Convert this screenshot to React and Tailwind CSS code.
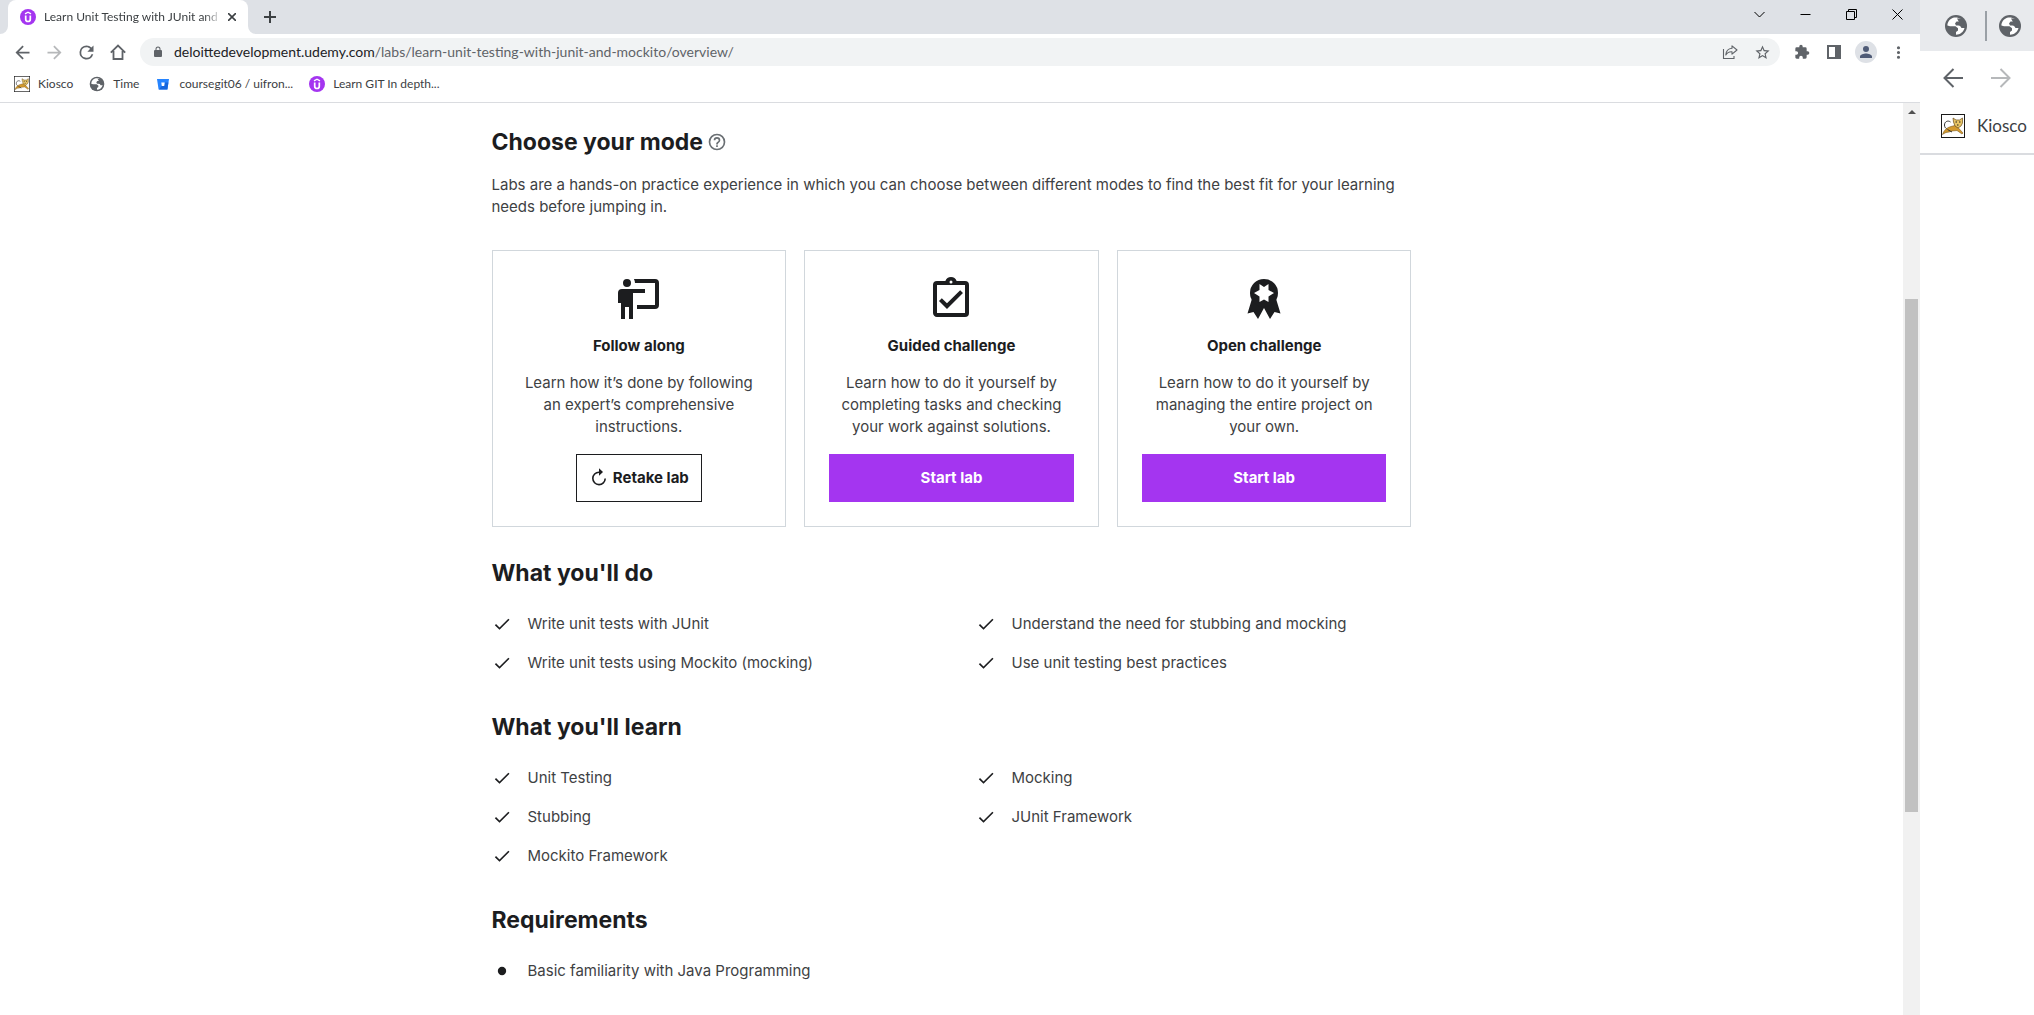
import React from "react";

/* ---------- icons ---------- */

function Icon({ d, className, viewBox = "0 0 24 24", children }) {
  return (
    <svg viewBox={viewBox} className={className} fill="currentColor" aria-hidden="true">
      {d ? <path d={d} /> : null}
      {children}
    </svg>
  );
}

const paths = {
  back: "M20 11H7.83l5.59-5.59L12 4l-8 8 8 8 1.41-1.41L7.83 13H20v-2z",
  forward: "M12 4l-1.41 1.41L16.17 11H4v2h12.17l-5.58 5.59L12 20l8-8z",
  reload:
    "M17.65 6.35A7.96 7.96 0 0 0 12 4a8 8 0 1 0 7.73 10h-2.08A6 6 0 1 1 12 6c1.66 0 3.14.69 4.22 1.78L13 11h7V4l-2.35 2.35z",
  lock: "M18 8h-1V6A5 5 0 0 0 7 6v2H6a2 2 0 0 0-2 2v10a2 2 0 0 0 2 2h12a2 2 0 0 0 2-2V10a2 2 0 0 0-2-2zM9 8V6a3 3 0 0 1 6 0v2H9z",
  star: "M22 9.24l-7.19-.62L12 2 9.19 8.63 2 9.24l5.46 4.73L5.82 21 12 17.27 18.18 21l-1.63-7.03L22 9.24zM12 15.4l-3.76 2.27 1-4.28-3.32-2.88 4.38-.38L12 6.1l1.71 4.04 4.38.38-3.32 2.88 1 4.28L12 15.4z",
  puzzle:
    "M20.5 11H19V7a2 2 0 0 0-2-2h-4V3.5a2.5 2.5 0 0 0-5 0V5H4a2 2 0 0 0-2 2v3.8h1.5a2.7 2.7 0 0 1 0 5.4H2V20c0 1.1.9 2 2 2h3.8v-1.5a2.7 2.7 0 0 1 5.4 0V22H17a2 2 0 0 0 2-2v-4h1.5a2.5 2.5 0 0 0 0-5z",
  person: "M12 12a4 4 0 1 0 0-8 4 4 0 0 0 0 8zm0 2c-2.67 0-8 1.34-8 4v2h16v-2c0-2.66-5.33-4-8-4z",
  dots: "M12 8a2 2 0 1 0 0-4 2 2 0 0 0 0 4zm0 2a2 2 0 1 0 0 4 2 2 0 0 0 0-4zm0 6a2 2 0 1 0 0 4 2 2 0 0 0 0-4z",
  globe:
    "M12 1a11 11 0 1 0 0 22 11 11 0 0 0 0-22zM11 20.500A8.600 8.600 0 0 1 3.600 10.500L6 12h4l2 2v3l-1 3.500zM18 18l-2-3-3-1-1-3 3-1 1 2 3 1 1.500 0A8.500 8.500 0 0 1 18 18zM8 9V7l3-1 1-2.500c3 0 1 1.500 2 2.500l-2 2-2 1z",
  help: "M11 18h2v-2h-2v2zm1-16a10 10 0 1 0 0 20 10 10 0 0 0 0-20zm0 18a8 8 0 1 1 0-16 8 8 0 0 1 0 16zm0-14a4 4 0 0 0-4 4h2a2 2 0 1 1 4 0c0 2-3 1.75-3 5h2c0-2.25 3-2.5 3-5a4 4 0 0 0-4-4z",
  check: "M9 16.17L4.83 12l-1.42 1.41L9 19 21 7l-1.41-1.41z",
  clipboard:
    "M19 3h-4.18a3 3 0 0 0-5.64 0H5a2 2 0 0 0-2 2v14c0 1.1.9 2 2 2h14a2 2 0 0 0 2-2V5a2 2 0 0 0-2-2zm-7-.25a.75.75 0 1 1 0 1.5.75.75 0 0 1 0-1.5zM19 19H5V5h14v14zM17.99 9l-1.41-1.42-6.59 6.59-2.58-2.57-1.42 1.41 4 3.99z",
  teacher:
    "M20 17a2 2 0 0 0 2-2V4a2 2 0 0 0-2-2H9.46c.35.61.54 1.3.54 2h10v11h-9v2h9zM15 7v2H9v13H7v-6H5v6H3v-8H1.5V9a2 2 0 0 1 2-2H15zM8 4a2 2 0 1 1-4 0 2 2 0 0 1 4 0z",
};

function GlobeMark({ className }) {
  return (
    <svg viewBox="0 0 24 24" className={className} aria-hidden="true">
      <circle cx="12" cy="12" r="11" fill="#5f6368" />
      <path
        d="M10 3.5C6 4.500 3.400 8 3.400 11.500L6 12.300h5.500l2.500 2v2.200l-2 1.500v2.700c4 0 7.500-2.700 8.500-6.700h-3l-1.500-2.500h-4L11 9.500l1.500-2h2.300L17 5C15 3.700 12.500 3.200 10 3.500z"
        fill="#fff"
      />
      <path d="M13 4.500h4l2.500 3.500v4.500H17L14.500 11l-2-1.500 2.500-1.500z" fill="#5f6368" />
    </svg>
  );
}

function UdemyMark({ className }) {
  return (
    <svg viewBox="0 0 16 16" className={className} aria-hidden="true">
      <circle cx="8" cy="8" r="8" fill="#a435f0" />
      <path d="M5 4.9 8 3.2l3 1.7" fill="none" stroke="#fff" strokeWidth="1.3" />
      <path d="M5.7 6.5v3.700a2.300 2.300 0 0 0 4.600 0V6.500" fill="none" stroke="#fff" strokeWidth="1.7" />
    </svg>
  );
}

function KioscoMark({ className }) {
  return (
    <svg viewBox="0 0 24 24" className={className} aria-hidden="true">
      <rect x=".5" y=".5" width="23" height="23" fill="#fff" stroke="#1a1a1a" />
      <path d="M1.5 20.500C3 16 6 13.500 10 12.500l4-1 3 2 5 5.500-1 1-5-3.500-5 .5-3 1-3 .5-2 1z" fill="#d39a2f" stroke="#7d5a1c" strokeWidth=".6" />
      <path d="M12 4l3 2h3.500l3-2v5l-1.500 3-3 2-3-2-1.500-4z" fill="#e8c565" stroke="#6b4d1a" strokeWidth=".7" />
      <path d="M14.500 8H16M18 8h1.500M16 11h1.500" stroke="#222" strokeWidth="1" />
      <path d="M9.500 8C7 6 3.500 7.500 3.500 11c0 2 .8 3 2 3.500M6.500 15.500 11 18" fill="none" stroke="#333" strokeWidth="1" />
    </svg>
  );
}

function BitbucketMark({ className }) {
  return (
    <svg viewBox="0 0 16 16" className={className} aria-hidden="true">
      <path d="M2 3h12l-1.6 10.500H3.600z" fill="#2684ff" />
      <path d="M13.400 6.500H9.700L9.200 10H6.800l-2.900 3.500h8.500z" fill="#1666dc" />
      <path d="M6.300 6.500h3.400l-.5 3.500H6.800z" fill="#fff" />
    </svg>
  );
}

function BadgeIcon({ className }) {
  return (
    <svg viewBox="0 0 48 48" className={className} aria-hidden="true">
      <path d="M12.500 22 7.500 38.500l6-1.500 4.500 7 6-11 6 11 4.500-7 6 1.500L35.500 22z" fill="#1c1d1f" />
      <circle cx="24" cy="18" r="14" fill="#1c1d1f" />
      <path d="M24 12l4.500-3 0 6 5.500 3-5.500 3.500 0 5.500-4.500-2.500-4.500 2.500 0-5.500L14 18l5.500-3 0-6z" fill="#fff" />
    </svg>
  );
}

function RetakeIcon({ className }) {
  return (
    <svg viewBox="0 0 20 20" className={className} aria-hidden="true">
      <path d="M11 4.200H10a6.200 6.200 0 1 0 6.200 6.300" fill="none" stroke="currentColor" strokeWidth="1.6" />
      <path d="M10 .3v7.500l4-3.800z" fill="currentColor" />
    </svg>
  );
}

/* ---------- browser window ---------- */

function IconButton({ label, className = "", children }) {
  return (
    <button type="button" aria-label={label} className={`flex h-8 w-8 items-center justify-center text-[#5f6368] ${className}`}>
      {children}
    </button>
  );
}

function WindowButton({ label, d }) {
  return (
    <button type="button" aria-label={label} className="flex h-7 w-[46px] items-center justify-center text-black">
      <svg viewBox="0 0 11 11" className="size-[11px]" fill="none" stroke="currentColor" aria-hidden="true">
        <path d={d} />
      </svg>
    </button>
  );
}

function TabStrip() {
  return (
    <div className="flex h-[34px] bg-[#dee1e6]">
      <svg viewBox="0 0 8 8" className="size-2 self-end" aria-hidden="true">
        <path d="M8 0v8H0a8 8 0 0 0 8-8z" fill="#fff" />
      </svg>
      <div className="flex w-60 items-center rounded-t-lg bg-white pr-2.5 pl-3">
        <UdemyMark className="mr-2 size-4 shrink-0" />
        <span className="min-w-0 flex-1 whitespace-nowrap mask-r-from-90% text-xs text-[#3c4043]">
          Learn Unit Testing with JUnit and
        </span>
        <button type="button" aria-label="Close tab" className="ml-1 flex size-3 shrink-0 items-center justify-center text-[#3c4043]">
          <svg viewBox="0 0 8 8" className="size-2" stroke="currentColor" strokeWidth="1.6" aria-hidden="true">
            <path d="M0 0l8 8M8 0L0 8" />
          </svg>
        </button>
      </div>
      <svg viewBox="0 0 8 8" className="size-2 self-end" aria-hidden="true">
        <path d="M0 0v8h8a8 8 0 0 1-8-8z" fill="#fff" />
      </svg>
      <button type="button" aria-label="New tab" className="flex w-7 items-center justify-center text-[#3c4043]">
        <svg viewBox="0 0 12 12" className="size-3" stroke="currentColor" strokeWidth="2" aria-hidden="true">
          <path d="M6 0v12M0 6h12" />
        </svg>
      </button>
      <div className="ml-auto flex">
        <WindowButton label="Search tabs" d="M.5 3l5 5 5-5" />
        <WindowButton label="Minimize" d="M.5 5.5h10" />
        <WindowButton label="Restore" d="M.5 2.5h8v8h-8zM2.5 2.5v-2h8v8h-2" />
        <WindowButton label="Close" d="M.5.5l10 10M10.5.5l-10 10" />
      </div>
    </div>
  );
}

function Toolbar() {
  return (
    <div className="flex h-9 items-center px-1.5">
      <IconButton label="Back"><Icon d={paths.back} className="size-[21px]" /></IconButton>
      <IconButton label="Forward" className="opacity-45"><Icon d={paths.forward} className="size-[21px]" /></IconButton>
      <IconButton label="Reload"><Icon d={paths.reload} className="size-[21px]" /></IconButton>
      <IconButton label="Home">
        <svg viewBox="0 0 16 16" className="size-4" fill="none" stroke="currentColor" strokeWidth="1.8" aria-hidden="true">
          <path d="M.8 8.600 8 1.500l7.200 7.100M3.500 7v8h9V7" />
        </svg>
      </IconButton>
      <div className="mx-1.5 flex h-7 flex-1 items-center rounded-full bg-[#f1f3f4] pr-0.5 pl-3">
        <Icon d={paths.lock} className="size-3 text-[#5f6368]" />
        <a href="#page" className="ml-2.5 flex-1 whitespace-nowrap text-sm text-[#202124]">
          deloittedevelopment.udemy.com
          <span className="text-[#5f6368]">/labs/learn-unit-testing-with-junit-and-mockito/overview/</span>
        </a>
        <IconButton label="Share">
          <svg viewBox="0 0 16 16" className="size-4" fill="none" stroke="currentColor" strokeWidth="1.1" aria-hidden="true">
            <path d="M1.500 5v9.500H12V12" />
            <path d="M10 1.800 15 6l-5 4.200V7.800C7 7.600 5 8.800 3.800 11c.2-3.600 2.500-6.300 6.200-6.700z" strokeLinejoin="round" />
          </svg>
        </IconButton>
        <IconButton label="Bookmark this page"><Icon d={paths.star} className="size-[17px]" /></IconButton>
      </div>
      <IconButton label="Extensions"><Icon d={paths.puzzle} className="size-4" /></IconButton>
      <IconButton label="Side panel">
        <svg viewBox="0 0 14 14" className="size-3.5" aria-hidden="true">
          <path d="M0 0h14v14H0zM2 2v10h6V2z" fill="currentColor" fillRule="evenodd" />
        </svg>
      </IconButton>
      <IconButton label="Profile">
        <span className="flex size-[22px] items-center justify-center rounded-full bg-[#dee1e6]">
          <Icon d={paths.person} className="size-[18px] text-[#4f5b76]" />
        </span>
      </IconButton>
      <IconButton label="Menu"><Icon d={paths.dots} className="size-[19px]" /></IconButton>
    </div>
  );
}

function Bookmark({ mark, children }) {
  return (
    <a href="#page" className="flex items-center gap-2 whitespace-nowrap">
      {mark}
      {children}
    </a>
  );
}

function BookmarksBar() {
  return (
    <nav aria-label="Bookmarks" className="mb-1 flex h-7 items-center gap-4 px-3.5 text-xs text-[#3c4043]">
      <Bookmark mark={<KioscoMark className="size-4" />}>Kiosco</Bookmark>
      <Bookmark mark={<GlobeMark className="size-4" />}>Time</Bookmark>
      <Bookmark mark={<BitbucketMark className="size-4" />}>coursegit06 / uifron...</Bookmark>
      <Bookmark mark={<UdemyMark className="size-4" />}>Learn GIT In depth...</Bookmark>
    </nav>
  );
}

/* ---------- page ---------- */

const modes = [
  {
    title: "Follow along",
    text: "Learn how it’s done by following an expert’s comprehensive instructions.",
    icon: <Icon d={paths.teacher} className="size-12" />,
    retake: true,
  },
  {
    title: "Guided challenge",
    text: "Learn how to do it yourself by completing tasks and checking your work against solutions.",
    icon: <Icon d={paths.clipboard} className="size-12" />,
  },
  {
    title: "Open challenge",
    text: "Learn how to do it yourself by managing the entire project on your own.",
    icon: <BadgeIcon className="size-12" />,
  },
];

function ModeCard({ title, text, icon, retake }) {
  return (
    <article className="flex flex-col items-center border border-[#d1d7dc] p-6 text-center">
      {icon}
      <h3 className="mt-[13px] leading-5 font-bold">{title}</h3>
      <p className="my-4 text-[#3e4143]">{text}</p>
      {retake ? (
        <button type="button" className="mt-auto flex h-12 items-center gap-1 border border-[#1c1d1f] px-3 font-bold">
          <RetakeIcon className="size-5" />
          Retake lab
        </button>
      ) : (
        <button type="button" className="mt-auto h-12 w-full bg-[#a435f0] font-bold text-white">
          Start lab
        </button>
      )}
    </article>
  );
}

function ListSection({ title, items, bullet }) {
  return (
    <section>
      <h2 className="text-[23px] leading-7 font-bold">{title}</h2>
      <ul className="mt-[26px] grid grid-cols-2 gap-x-12 gap-y-[17px] text-[#3e4143]">
        {items.map((item) => (
          <li key={item} className="flex items-center gap-4">
            <Icon d={bullet ? undefined : paths.check} className="size-5 shrink-0 text-[#1c1d1f]">
              {bullet ? <circle cx="12" cy="12" r="5" /> : null}
            </Icon>
            {item}
          </li>
        ))}
      </ul>
    </section>
  );
}

function LabPage() {
  return (
    <main id="page" className="min-w-0 flex-1 overflow-hidden bg-white font-[Inter,sans-serif] text-[15px] leading-[22px] text-[#1c1d1f]">
      <div className="mx-auto max-w-[920px] pt-[25px]">
        <div className="flex items-center gap-1">
          <h2 className="text-[23px] leading-7 font-bold">Choose your mode</h2>
          <button type="button" aria-label="About modes" className="text-[#6a6f73]">
            <Icon d={paths.help} className="size-5" />
          </button>
        </div>
        <p className="mt-[18px] text-[#3e4143]">
          Labs are a hands-on practice experience in which you can choose between different modes to find the best fit for your learning needs before jumping in.
        </p>
        <div className="my-8 grid grid-cols-3 gap-[18px]">
          {modes.map((m) => (
            <ModeCard key={m.title} {...m} />
          ))}
        </div>
        <div className="flex flex-col gap-[39px]">
          <ListSection
            title="What you'll do"
            items={[
              "Write unit tests with JUnit",
              "Understand the need for stubbing and mocking",
              "Write unit tests using Mockito (mocking)",
              "Use unit testing best practices",
            ]}
          />
          <ListSection
            title="What you'll learn"
            items={["Unit Testing", "Mocking", "Stubbing", "JUnit Framework", "Mockito Framework"]}
          />
          <ListSection title="Requirements" items={["Basic familiarity with Java Programming"]} bullet />
        </div>
      </div>
    </main>
  );
}

function Scrollbar() {
  return (
    <div className="flex w-[17px] flex-col bg-[#f1f1f1] px-0.5">
      <div className="flex h-[17px] items-center justify-center">
        <svg viewBox="0 0 8 4" className="h-1 w-2" aria-hidden="true">
          <path d="M0 4l4-4 4 4z" fill="#505050" />
        </svg>
      </div>
      <div className="flex-[179]" />
      <div className="flex-[513] bg-[#c1c1c1]" />
      <div className="flex-[203]" />
    </div>
  );
}

/* ---------- neighbouring window, larger display scale ---------- */

function SideWindow() {
  return (
    <aside className="w-[114px] shrink-0 overflow-hidden bg-white">
      <div className="flex h-[51px] items-center bg-[#e8eaed] pl-6">
        <GlobeMark className="size-6 shrink-0" />
        <div className="ml-[17px] h-[30px] w-0.5 shrink-0 bg-[#9aa0a6]" />
        <GlobeMark className="ml-[11px] size-6 shrink-0" />
      </div>
      <div className="flex h-[54px] items-center pl-[17px] text-[#5f6368]">
        <button type="button" aria-label="Back" className="flex size-8 shrink-0 items-center justify-center">
          <svg viewBox="0 0 20 20" className="size-5" fill="none" stroke="currentColor" strokeWidth="2" aria-hidden="true">
            <path d="M20 10H1.500M10.500 1l-9 9 9 9" />
          </svg>
        </button>
        <button type="button" aria-label="Forward" className="ml-4 flex size-8 shrink-0 items-center justify-center opacity-45">
          <svg viewBox="0 0 20 20" className="size-5" fill="none" stroke="currentColor" strokeWidth="2" aria-hidden="true">
            <path d="M0 10h18.500M9.500 1l9 9-9 9" />
          </svg>
        </button>
      </div>
      <nav aria-label="Bookmarks" className="flex h-[50px] items-center border-b-2 border-[#dadce0] pb-1.5 pl-[21px] text-[17px] text-[#3c4043]">
        <a href="#page" className="flex items-center gap-3">
          <KioscoMark className="size-6 shrink-0" />
          Kiosco
        </a>
      </nav>
    </aside>
  );
}

export default function App() {
  return (
    <div className="flex h-screen overflow-hidden bg-white font-[Lato,sans-serif]">
      <div className="flex min-w-0 flex-1 flex-col">
        <header className="border-b border-[#dadce0]">
          <TabStrip />
          <Toolbar />
          <BookmarksBar />
        </header>
        <div className="flex min-h-0 flex-1">
          <LabPage />
          <Scrollbar />
        </div>
      </div>
      <SideWindow />
    </div>
  );
}
